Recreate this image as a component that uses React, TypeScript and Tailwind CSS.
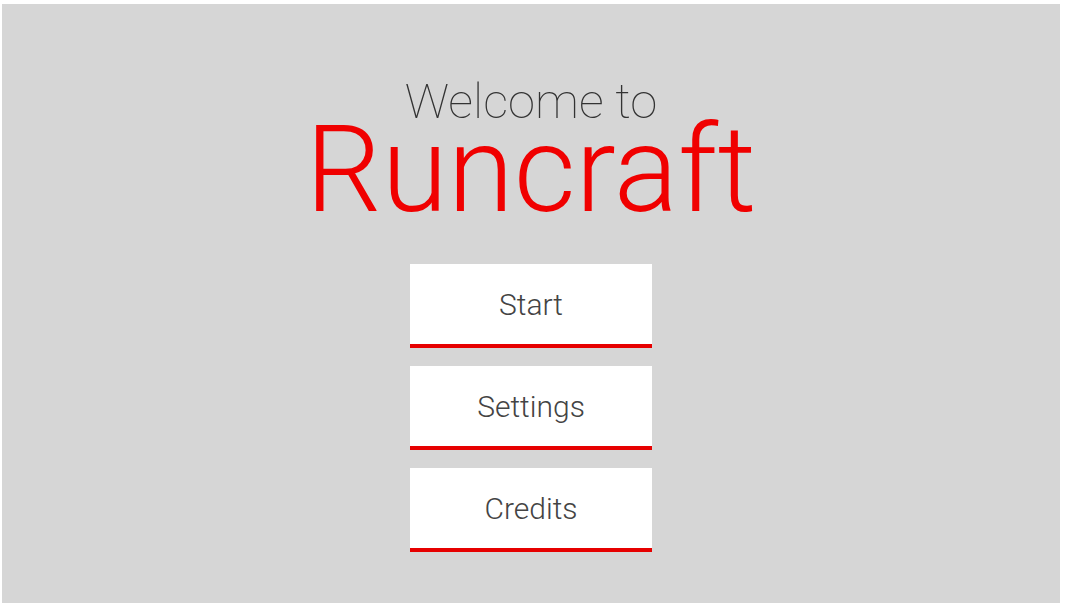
const menuItems = ['Start', 'Settings', 'Credits']

function MenuButton({ label }: { label: string }) {
  return (
    <button
      type="button"
      className="flex h-[84px] w-[242px] items-center justify-center border-b-4 border-[#e60000] bg-white pt-[1px] text-[30px] font-light text-[#444444]"
    >
      {label}
    </button>
  )
}

export default function App() {
  return (
    <div className="h-[607px] w-[1065px] bg-white pt-[4px] pl-[2px] font-['Roboto',sans-serif]">
      <div className="flex h-[599px] w-[1058px] flex-col items-center bg-[#d6d6d6] pt-[74px]">
        <h2 className="text-[49px] leading-[48px] font-thin text-[#333333]">Welcome to</h2>
        <h1 className="text-[120px] leading-[88px] font-light text-[#f00000]">Runcraft</h1>
        <nav className="mt-[50px] flex flex-col gap-[18px]">
          {menuItems.map((item) => (
            <MenuButton key={item} label={item} />
          ))}
        </nav>
      </div>
    </div>
  )
}
